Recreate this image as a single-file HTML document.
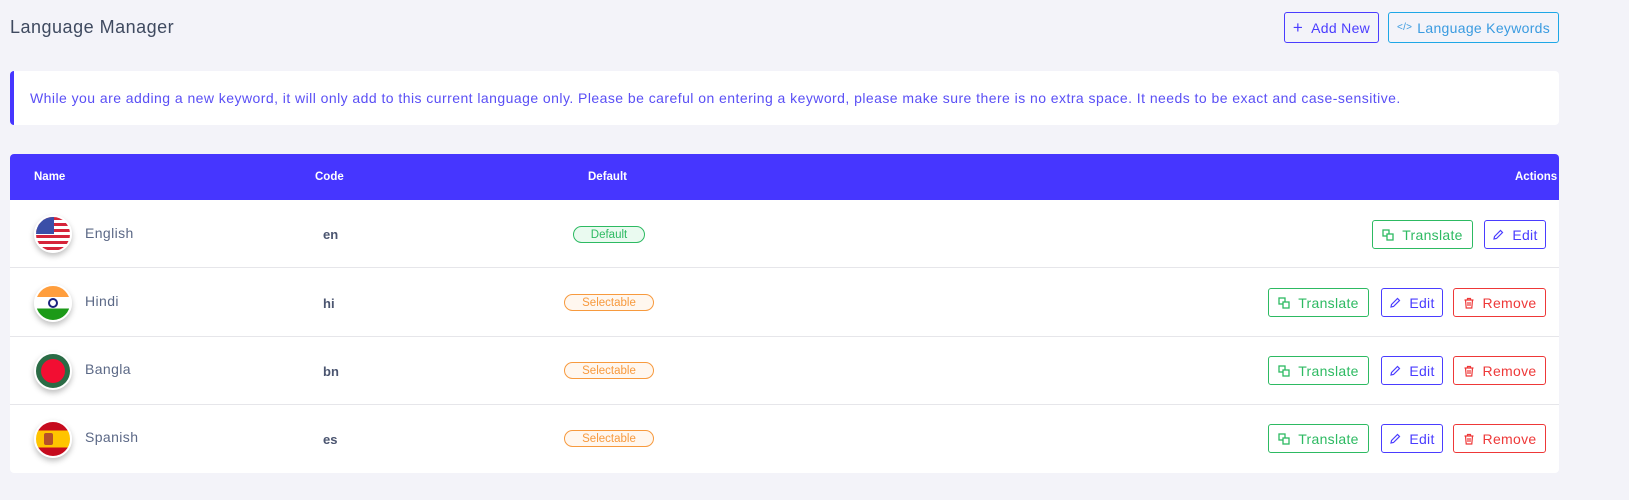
<!DOCTYPE html>
<html><head><meta charset="utf-8"><style>
*{box-sizing:border-box;margin:0;padding:0}
body{width:1629px;height:500px;background:#f3f3f9;font-family:"Liberation Sans",sans-serif;position:relative;overflow:hidden;color:#5b6886}
.a{position:absolute}
.title{left:10px;top:17px;font-size:18px;letter-spacing:.5px;color:#3f4a60}
.btn{position:absolute;height:29px;border:1px solid;border-radius:3px;font-size:14px;letter-spacing:.3px;display:flex;align-items:center;justify-content:center;gap:8px;background:#fff}
.btn svg{width:12px;height:12px}
.top{background:transparent}
.alert{left:10px;top:71px;width:1549px;height:54px;background:#fff;border-left:4px solid #4636ff;border-radius:4px;color:#5a4ff5;font-size:14px;letter-spacing:.45px;padding:19px 0 0 16px;white-space:nowrap}
.card{left:10px;top:154px;width:1549px;height:319px;background:#fff;border-radius:4px;overflow:hidden}
.head{position:absolute;left:0;top:0;width:100%;height:46px;background:#4636ff;color:#fff;font-weight:bold;font-size:11.5px}
.head span{position:absolute;top:17px}
.row{position:absolute;left:0;width:100%;height:68px;border-bottom:1px solid #e6e6ea}
.flag{position:absolute;left:24px;width:38px;height:38px;border-radius:50%;border:2px solid #fff;box-shadow:0 3px 6px rgba(0,0,0,.25);overflow:hidden}
.name{position:absolute;left:75px;font-size:14px;letter-spacing:.4px;color:#5b6886}
.code{position:absolute;left:313px;font-size:13px;font-weight:bold;color:#4b5570}
.badge{position:absolute;height:17px;border:1px solid;border-radius:9px;font-size:11.5px;display:flex;align-items:center;justify-content:center}
.g{color:#2dba62;border-color:#2dba62}
.b{color:#4a3cff;border-color:#4a3cff}
.r{color:#ee3838;border-color:#ee3838}
</style></head><body>
<div class="a title">Language Manager</div>
<div class="btn top b" style="left:1284px;top:12px;width:95px;height:31px"><span style="font-size:17px;font-weight:300">+</span>Add New</div>
<div class="btn top" style="left:1388px;top:12px;width:171px;height:31px;border-color:#1ea7e6;color:#3a9be0;gap:5px"><span style="font-size:10px">&lt;/&gt;</span>Language Keywords</div>
<div class="a alert">While you are adding a new keyword, it will only add to this current language only. Please be careful on entering a keyword, please make sure there is no extra space. It needs to be exact and case-sensitive.</div>
<div class="a card">
<div class="head"><span style="left:24px">Name</span><span style="left:305px">Code</span><span style="left:578px">Default</span><span style="left:1505px">Actions</span></div>

<div class="row" style="top:46px">
<div class="flag" style="top:15px;background:repeating-linear-gradient(#d5243a 0 3px,#fff 3px 6px)"><div style="position:absolute;left:0;top:0;width:18px;height:17px;background:#3b4fa8"></div></div>
<div class="name" style="top:25px">English</div><div class="code" style="top:27px">en</div>
<div class="badge g" style="left:563px;top:26px;width:72px;background:#eafaf0">Default</div>
<div class="btn g" style="left:1362px;top:20px;width:101px"><svg viewBox="0 0 12 12" fill="none" stroke="#2dba62" stroke-width="1.3"><rect x="1" y="1" width="6" height="6"/><rect x="5" y="5" width="6" height="6" fill="#fff"/></svg>Translate</div>
<div class="btn b" style="left:1474px;top:20px;width:62px"><svg viewBox="0 0 12 12" fill="none" stroke="#4a3cff" stroke-width="1.2"><path d="M2 10l.5-2.5L8.5 1.5l2 2-6 6z"/></svg>Edit</div>
</div>

<div class="row" style="top:115px">
<div class="flag" style="top:15px;background:linear-gradient(#ff9e3d 0 33%,#fff 33% 66%,#1c9a18 66%)"><div style="position:absolute;left:12px;top:12px;width:10px;height:10px;border-radius:50%;border:2px solid #1a237e"></div></div>
<div class="name" style="top:24px">Hindi</div><div class="code" style="top:27px">hi</div>
<div class="badge" style="left:554px;top:25px;width:90px;color:#f79a3e;border-color:#f79a3e;background:#fff7ef">Selectable</div>
<div class="btn g" style="left:1258px;top:19px;width:101px"><svg viewBox="0 0 12 12" fill="none" stroke="#2dba62" stroke-width="1.3"><rect x="1" y="1" width="6" height="6"/><rect x="5" y="5" width="6" height="6" fill="#fff"/></svg>Translate</div>
<div class="btn b" style="left:1371px;top:19px;width:62px"><svg viewBox="0 0 12 12" fill="none" stroke="#4a3cff" stroke-width="1.2"><path d="M2 10l.5-2.5L8.5 1.5l2 2-6 6z"/></svg>Edit</div>
<div class="btn r" style="left:1443px;top:19px;width:93px"><svg viewBox="0 0 12 12" fill="none" stroke="#ee3838" stroke-width="1.2"><path d="M1.5 3h9M4.5 3V1.5h3V3M2.5 3l.7 8h5.6l.7-8M5 5v4M7 5v4"/></svg>Remove</div>
</div>

<div class="row" style="top:183px">
<div class="flag" style="top:15px;background:#2a6b45"><div style="position:absolute;left:5px;top:5px;width:24px;height:24px;border-radius:50%;background:#f20e32"></div></div>
<div class="name" style="top:24px">Bangla</div><div class="code" style="top:27px">bn</div>
<div class="badge" style="left:554px;top:25px;width:90px;color:#f79a3e;border-color:#f79a3e;background:#fff7ef">Selectable</div>
<div class="btn g" style="left:1258px;top:19px;width:101px"><svg viewBox="0 0 12 12" fill="none" stroke="#2dba62" stroke-width="1.3"><rect x="1" y="1" width="6" height="6"/><rect x="5" y="5" width="6" height="6" fill="#fff"/></svg>Translate</div>
<div class="btn b" style="left:1371px;top:19px;width:62px"><svg viewBox="0 0 12 12" fill="none" stroke="#4a3cff" stroke-width="1.2"><path d="M2 10l.5-2.5L8.5 1.5l2 2-6 6z"/></svg>Edit</div>
<div class="btn r" style="left:1443px;top:19px;width:93px"><svg viewBox="0 0 12 12" fill="none" stroke="#ee3838" stroke-width="1.2"><path d="M1.5 3h9M4.5 3V1.5h3V3M2.5 3l.7 8h5.6l.7-8M5 5v4M7 5v4"/></svg>Remove</div>
</div>

<div class="row" style="top:251px;border-bottom:none">
<div class="flag" style="top:15px;background:linear-gradient(#c60b1e 0 25%,#ffc400 25% 75%,#c60b1e 75%)"><div style="position:absolute;left:8px;top:11px;width:9px;height:12px;background:#b5502a;border-radius:2px"></div></div>
<div class="name" style="top:24px">Spanish</div><div class="code" style="top:27px">es</div>
<div class="badge" style="left:554px;top:25px;width:90px;color:#f79a3e;border-color:#f79a3e;background:#fff7ef">Selectable</div>
<div class="btn g" style="left:1258px;top:19px;width:101px"><svg viewBox="0 0 12 12" fill="none" stroke="#2dba62" stroke-width="1.3"><rect x="1" y="1" width="6" height="6"/><rect x="5" y="5" width="6" height="6" fill="#fff"/></svg>Translate</div>
<div class="btn b" style="left:1371px;top:19px;width:62px"><svg viewBox="0 0 12 12" fill="none" stroke="#4a3cff" stroke-width="1.2"><path d="M2 10l.5-2.5L8.5 1.5l2 2-6 6z"/></svg>Edit</div>
<div class="btn r" style="left:1443px;top:19px;width:93px"><svg viewBox="0 0 12 12" fill="none" stroke="#ee3838" stroke-width="1.2"><path d="M1.5 3h9M4.5 3V1.5h3V3M2.5 3l.7 8h5.6l.7-8M5 5v4M7 5v4"/></svg>Remove</div>
</div>
</div>
</body></html>
